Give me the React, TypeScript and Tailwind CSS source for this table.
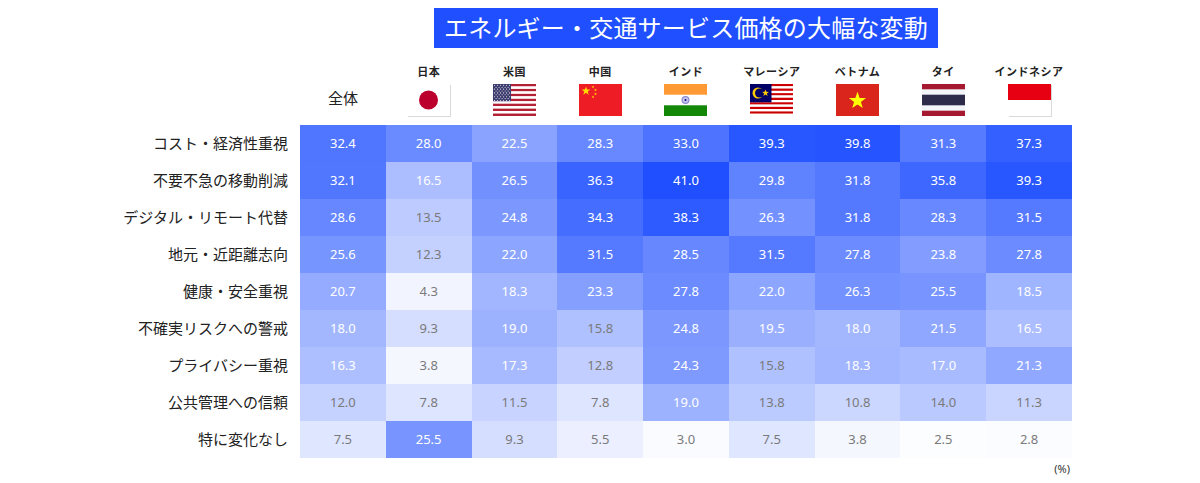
import type { ReactNode } from "react";

const FONT = { fontFamily: '"Noto Sans", "Noto Sans CJK JP", sans-serif' };

const rows: { label: string; values: number[] }[] = [
  { label: "コスト・経済性重視", values: [32.4, 28.0, 22.5, 28.3, 33.0, 39.3, 39.8, 31.3, 37.3] },
  { label: "不要不急の移動削減", values: [32.1, 16.5, 26.5, 36.3, 41.0, 29.8, 31.8, 35.8, 39.3] },
  { label: "デジタル・リモート代替", values: [28.6, 13.5, 24.8, 34.3, 38.3, 26.3, 31.8, 28.3, 31.5] },
  { label: "地元・近距離志向", values: [25.6, 12.3, 22.0, 31.5, 28.5, 31.5, 27.8, 23.8, 27.8] },
  { label: "健康・安全重視", values: [20.7, 4.3, 18.3, 23.3, 27.8, 22.0, 26.3, 25.5, 18.5] },
  { label: "不確実リスクへの警戒", values: [18.0, 9.3, 19.0, 15.8, 24.8, 19.5, 18.0, 21.5, 16.5] },
  { label: "プライバシー重視", values: [16.3, 3.8, 17.3, 12.8, 24.3, 15.8, 18.3, 17.0, 21.3] },
  { label: "公共管理への信頼", values: [12.0, 7.8, 11.5, 7.8, 19.0, 13.8, 10.8, 14.0, 11.3] },
  { label: "特に変化なし", values: [7.5, 25.5, 9.3, 5.5, 3.0, 7.5, 3.8, 2.5, 2.8] },
];

// heat colour: near-white at the minimum, strong blue at the maximum
const cellColor = (v: number) => {
  const t = Math.min(1, Math.max(0, (v - 2.5) / (41 - 2.5)));
  const lo = [252, 253, 255];
  const hi = [31, 79, 255];
  const c = lo.map((l, i) => Math.round(l + (hi[i] - l) * t));
  return `rgb(${c[0]}, ${c[1]}, ${c[2]})`;
};

const FlagBox = ({ children, border }: { children: ReactNode; border?: boolean }) => (
  <svg
    width="43"
    height="32"
    viewBox="0 0 43 32"
    className={border ? "drop-shadow-[1px_1px_0_rgba(0,0,0,0.15)]" : ""}
  >
    {children}
  </svg>
);

const Japan = () => (
  <FlagBox border>
    <rect width="43" height="32" fill="#fff" />
    <circle cx="21.5" cy="16" r="9.5" fill="#bc002d" />
  </FlagBox>
);

const USA = () => (
  <FlagBox>
    {Array.from({ length: 13 }).map((_, i) => (
      <rect key={i} y={(i * 32) / 13} width="43" height={32 / 13 + 0.05} fill={i % 2 === 0 ? "#b22234" : "#fff"} />
    ))}
    <rect width="18" height={(32 / 13) * 7} fill="#3c3b6e" />
    {Array.from({ length: 9 }).map((_, r) =>
      Array.from({ length: r % 2 === 0 ? 6 : 5 }).map((_, c) => (
        <circle key={`${r}-${c}`} cx={1.6 + c * 3 + (r % 2 ? 1.5 : 0)} cy={1.3 + r * 1.9} r="0.55" fill="#fff" />
      ))
    )}
  </FlagBox>
);

const star = (cx: number, cy: number, r: number) => {
  const pts: string[] = [];
  for (let i = 0; i < 10; i++) {
    const a = -Math.PI / 2 + (i * Math.PI) / 5;
    const rr = i % 2 === 0 ? r : r * 0.4;
    pts.push(`${(cx + rr * Math.cos(a)).toFixed(2)},${(cy + rr * Math.sin(a)).toFixed(2)}`);
  }
  return pts.join(" ");
};

const China = () => (
  <FlagBox>
    <rect width="43" height="32" fill="#ee1c25" />
    <polygon points={star(7, 7, 4.6)} fill="#ffde00" />
    <polygon points={star(14, 3, 1.5)} fill="#ffde00" />
    <polygon points={star(16.5, 6, 1.5)} fill="#ffde00" />
    <polygon points={star(16.5, 10, 1.5)} fill="#ffde00" />
    <polygon points={star(14, 13, 1.5)} fill="#ffde00" />
  </FlagBox>
);

const India = () => (
  <FlagBox>
    <rect width="43" height="11" fill="#ff9933" />
    <rect y="10.7" width="43" height="10.6" fill="#fff" />
    <rect y="21.3" width="43" height="10.7" fill="#138808" />
    <circle cx="21.5" cy="16" r="4" fill="#8b8bd0" />
    <circle cx="21.5" cy="16" r="2.8" fill="#c8c8ee" />
    <circle cx="21.5" cy="16" r="1" fill="#000080" />
  </FlagBox>
);

const Malaysia = () => (
  <FlagBox>
    {Array.from({ length: 14 }).map((_, i) => (
      <rect key={i} y={(i * 32) / 14} width="43" height={32 / 14 + 0.05} fill={i % 2 === 0 ? "#cc0001" : "#fff"} />
    ))}
    <rect width="21.5" height={(32 / 14) * 8} fill="#010066" />
    <circle cx="8" cy="9" r="5.5" fill="#ffcc00" />
    <circle cx="9.6" cy="9" r="4.6" fill="#010066" />
    <polygon points={star(15.5, 9, 3.6)} fill="#ffcc00" />
  </FlagBox>
);

const Vietnam = () => (
  <FlagBox>
    <rect width="43" height="32" fill="#da251d" />
    <polygon points={star(21.5, 16.8, 9)} fill="#ffff00" />
  </FlagBox>
);

const Thailand = () => (
  <FlagBox>
    <rect width="43" height="32" fill="#a51931" />
    <rect y="5.3" width="43" height="21.4" fill="#f4f5f8" />
    <rect y="10.7" width="43" height="10.6" fill="#2d2a4a" />
  </FlagBox>
);

const Indonesia = () => (
  <FlagBox border>
    <rect width="43" height="32" fill="#fff" />
    <rect width="43" height="16" fill="#e70011" />
  </FlagBox>
);

const countries = [
  { name: "日本", flag: <Japan /> },
  { name: "米国", flag: <USA /> },
  { name: "中国", flag: <China /> },
  { name: "インド", flag: <India /> },
  { name: "マレーシア", flag: <Malaysia /> },
  { name: "ベトナム", flag: <Vietnam /> },
  { name: "タイ", flag: <Thailand /> },
  { name: "インドネシア", flag: <Indonesia /> },
];

export default function App() {
  return (
    <div className="w-[1200px] h-[483px] bg-white text-[#222]" style={FONT}>
      {/* title */}
      <div className="flex pt-2">
        <div className="w-[300px] shrink-0" />
        <div className="w-[772px] flex justify-center">
          <h1 className="h-10 px-2.5 flex items-center bg-[#1f4fff] text-white text-[24px] leading-none tracking-[0.2px]">
            エネルギー・交通サービス価格の大幅な変動
          </h1>
        </div>
      </div>

      {/* header */}
      <div className="flex h-[77px]">
        <div className="w-[300px] shrink-0" />
        <div className="w-[772px] grid grid-cols-9">
          <div className="flex items-end justify-center pb-[16px] text-[15px]">全体</div>
          {countries.map((c) => (
            <div key={c.name} className="flex flex-col items-center pt-[17px]">
              <span className="text-[11px] font-semibold text-[#222] leading-[14px] tracking-[0.5px]">{c.name}</span>
              <div className="mt-[5px]">{c.flag}</div>
            </div>
          ))}
        </div>
      </div>

      {/* body */}
      <div className="flex">
        <div className="w-[300px] shrink-0 flex flex-col pr-3">
          {rows.map((r) => (
            <div key={r.label} className="h-[37px] flex items-center justify-end text-[15px] text-[#222]">
              {r.label}
            </div>
          ))}
        </div>
        <div className="w-[772px] grid grid-cols-9">
          {rows.map((r) =>
            r.values.map((v, i) => (
              <div
                key={`${r.label}-${i}`}
                className={`h-[37px] flex items-center justify-center text-[13px] ${v >= 16 ? "text-white" : "text-[#7a7a7a]"}`}
                style={{ backgroundColor: cellColor(v) }}
              >
                {v.toFixed(1)}
              </div>
            ))
          )}
        </div>
      </div>

      {/* unit */}
      <div className="flex">
        <div className="w-[1070px] flex justify-end pt-[3px] text-[11px] text-[#333]">(%)</div>
      </div>
    </div>
  );
}
